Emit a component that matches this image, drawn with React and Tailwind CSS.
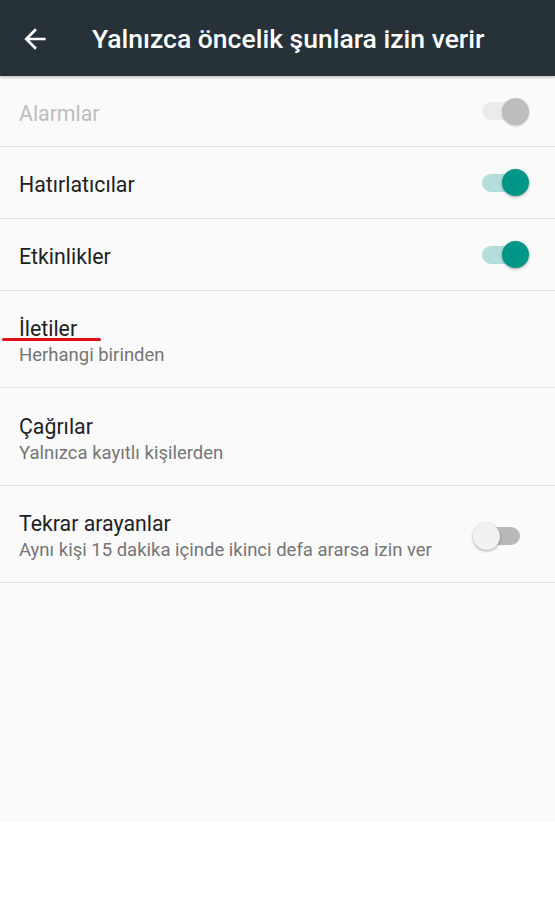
import React from "react";

function Switch({ on, disabled }) {
  if (disabled) {
    return (
      <div className="relative w-[47px] h-[27px] shrink-0">
        <div className="absolute left-0 top-[4.5px] w-[38px] h-[18px] rounded-full bg-[#ebebeb]" />
        <div className="absolute right-0 top-0 w-[27px] h-[27px] rounded-full bg-[#bdbdbd] shadow-[0_1px_2px_rgba(0,0,0,0.25)]" />
      </div>
    );
  }
  if (on) {
    return (
      <div className="relative w-[47px] h-[27px] shrink-0">
        <div className="absolute left-0 top-[4.5px] w-[38px] h-[18px] rounded-full bg-[#b2dfdb]" />
        <div className="absolute right-0 top-0 w-[27px] h-[27px] rounded-full bg-[#009688] shadow-[0_1px_3px_rgba(0,0,0,0.35)]" />
      </div>
    );
  }
  return (
    <div className="relative w-[47px] h-[27px] shrink-0">
      <div className="absolute right-0 top-[4.5px] w-[40px] h-[18px] rounded-full bg-[#b9b9b9]" />
      <div className="absolute left-0 top-0 w-[27px] h-[27px] rounded-full bg-[#f1f1f1] shadow-[0_1px_3px_rgba(0,0,0,0.35)]" />
    </div>
  );
}

export default function App() {
  return (
    <div className="w-[555px] h-[900px] bg-white" style={{ fontFamily: "Roboto, 'Noto Sans', sans-serif" }}>
      <div className="h-[822px] bg-[#fafafa] flex flex-col">
        <div className="relative z-10 h-[76px] bg-[#263238] flex items-center shadow-[0_1px_3px_rgba(0,0,0,0.3)]">
          <svg width="32" height="32" viewBox="0 0 24 24" className="ml-[19px] mt-[2px]" fill="#ffffff">
            <path d="M20 11H7.83l5.59-5.59L12 4l-8 8 8 8 1.41-1.41L7.83 13H20v-2z" />
          </svg>
          <div className="ml-[41px] mt-[2px] text-white text-[26.5px] font-medium leading-none">
            Yalnızca öncelik şunlara izin verir
          </div>
        </div>

        <div className="h-[71px] border-b border-[#dedede] flex items-center pl-[19px] pr-[26px]">
          <div className="flex-1 text-[21.3px] mt-[5px] text-[#bdbdbd]">Alarmlar</div>
          <Switch disabled />
        </div>
        <div className="h-[72px] border-b border-[#dedede] flex items-center pl-[19px] pr-[26px]">
          <div className="flex-1 text-[21.3px] mt-[5px] text-[#212121]">Hatırlatıcılar</div>
          <Switch on />
        </div>
        <div className="h-[72px] border-b border-[#dedede] flex items-center pl-[19px] pr-[26px]">
          <div className="flex-1 text-[21.3px] mt-[5px] text-[#212121]">Etkinlikler</div>
          <Switch on />
        </div>
        <div className="relative h-[97px] border-b border-[#dedede] flex flex-col justify-center pl-[19px] pt-[4px]">
          <div className="text-[21.3px] leading-[28px] text-[#212121]">İletiler</div>
          <div className="text-[18.5px] leading-[24px] text-[#757575]">Herhangi birinden</div>
          <div className="absolute left-[2px] top-[47px] w-[99px] h-[3px] rounded-full bg-[#e3101c]" />
        </div>
        <div className="h-[98px] border-b border-[#dedede] flex flex-col justify-center pl-[19px] pt-[4px]">
          <div className="text-[21.3px] leading-[28px] text-[#212121]">Çağrılar</div>
          <div className="text-[18.5px] leading-[24px] text-[#757575]">Yalnızca kayıtlı kişilerden</div>
        </div>
        <div className="h-[97px] border-b border-[#dedede] flex items-center pl-[19px] pr-[35px] pt-[4px]">
          <div className="flex-1 flex flex-col">
            <div className="text-[21.3px] leading-[28px] text-[#212121]">Tekrar arayanlar</div>
            <div className="text-[18.5px] leading-[24px] text-[#757575]">Aynı kişi 15 dakika içinde ikinci defa ararsa izin ver</div>
          </div>
          <Switch />
        </div>
      </div>
    </div>
  );
}
